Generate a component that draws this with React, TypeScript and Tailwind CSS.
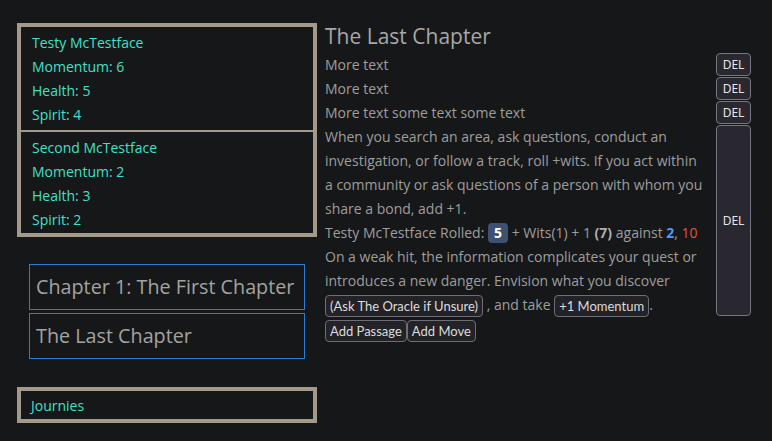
const font = "font-['Open_Sans','Noto_Sans',sans-serif]";

function Stat({ label }: { label: string }) {
  return <div className="h-6 leading-6">{label}</div>;
}

function Character({ name, momentum, health, spirit, divider }: { name: string; momentum: number; health: number; spirit: number; divider?: boolean }) {
  return (
    <div className={divider ? "border-t-2 border-[#a59a89] pl-[11px] pt-[4px] pb-[1px]" : "pl-[11px] pt-[4px] pb-[3px]"}>
      <Stat label={name} />
      <Stat label={`Momentum: ${momentum}`} />
      <Stat label={`Health: ${health}`} />
      <Stat label={`Spirit: ${spirit}`} />
    </div>
  );
}

function Del() {
  return (
    <button className="w-[35px] mb-[1px] rounded-[4px] border border-[#77757d] bg-[#29272f] text-[12px] text-[#e6e6e6] font-['Noto_Sans',sans-serif] leading-none">
      DEL
    </button>
  );
}

function Chip({ children }: { children: React.ReactNode }) {
  return (
    <button className="h-[22px] rounded-[4px] border border-[#6f6d74] bg-[#232227] px-[4px] text-[13px] leading-none text-[#dcdcdc] font-['Lato',sans-serif] align-middle">
      {children}
    </button>
  );
}

function Passage({ children }: { children: React.ReactNode }) {
  return (
    <div className="flex items-stretch justify-between">
      <div className="w-[383px] leading-6">{children}</div>
      <Del />
    </div>
  );
}

export default function App() {
  return (
    <div className={`min-h-screen bg-[#161718] ${font} text-[14px] flex items-start gap-2 pl-[17px] pt-[23px]`}>
      {/* sidebar */}
      <div className="w-[300px] shrink-0 flex flex-col">
        <div className="border-4 border-[#a59a89] text-[#40e0c8]">
          <Character name="Testy McTestface" momentum={6} health={5} spirit={4} />
          <Character name="Second McTestface" momentum={2} health={3} spirit={2} divider />
        </div>

        <div className="mt-[27px] mx-3 flex flex-col gap-[3px] text-[19.75px] text-[#a3a3a3]">
          <div className="h-[46px] border border-[#2b7dd6] pl-[6px] flex items-center whitespace-nowrap">Chapter 1: The First Chapter</div>
          <div className="h-[46px] border border-[#2b7dd6] pl-[6px] flex items-center">The Last Chapter</div>
        </div>

        <div className="mt-[28px] h-[36px] border-4 border-[#a59a89] pl-[10px] flex items-center text-[#40e0c8]">Journies</div>
      </div>

      {/* chapter */}
      <div className="flex-1 pr-[21px] -mt-[4px] text-[#9e9e9e]">
        <h1 className="text-[21px] leading-[34px] text-[#a8a8a8]">The Last Chapter</h1>
        <Passage>More text</Passage>
        <Passage>More text</Passage>
        <Passage>More text some text some text</Passage>
        <Passage>
          When you search an area, ask questions, conduct an investigation, or follow a track, roll +wits. If you act within a community or ask questions of a person with whom you share a bond, add +1.
          <br />
          Testy McTestface Rolled:{" "}
          <span className="inline-block h-5 leading-5 rounded-[4px] bg-[#3f5170] px-[6px] font-bold text-white">5</span>{" "}
          + Wits(1) + 1 <b className="text-[#b0b0b0]">(7)</b> against <b className="text-[#4a9cf0]">2</b>, <span className="text-[#e0553f]">10</span>
          <br />
          On a weak hit, the information complicates your quest or introduces a new danger. Envision what you discover{" "}
          <Chip>(Ask The Oracle if Unsure)</Chip> , and take <Chip>+1 Momentum</Chip>.
        </Passage>
        <div className="mt-[3px] flex">
          <Chip>Add Passage</Chip>
          <Chip>Add Move</Chip>
        </div>
      </div>
    </div>
  );
}
